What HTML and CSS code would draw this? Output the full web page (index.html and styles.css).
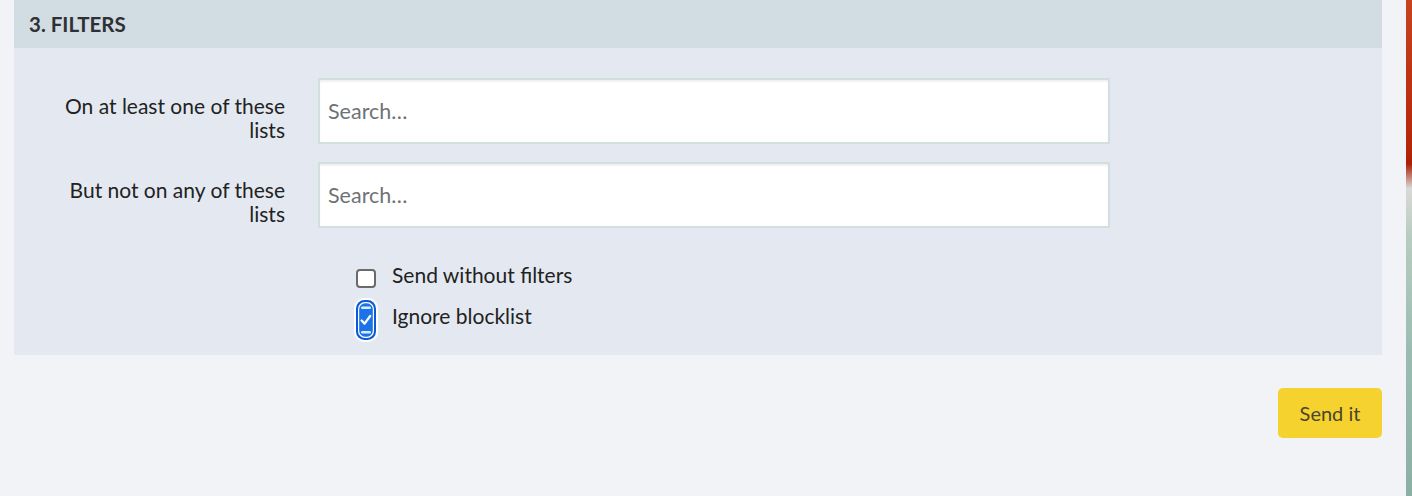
FILE: index.html
```html
<!DOCTYPE html>
<html>
<head>
<meta charset="utf-8">
<link rel="stylesheet" href="styles.css">
</head>
<body>
<div class="page">
  <div class="main">
    <section class="panel">
      <div class="panel-head">3. FILTERS</div>
      <div class="panel-body">
        <div class="row">
          <label class="label">On at least one of these lists</label>
          <div class="field"><input class="search" type="text" placeholder="Search…"></div>
        </div>
        <div class="row">
          <label class="label">But not on any of these lists</label>
          <div class="field"><input class="search" type="text" placeholder="Search…"></div>
        </div>
        <div class="checks">
          <div class="check check-first">
            <span class="box"></span>
            <span class="check-text">Send without filters</span>
          </div>
          <div class="check check-second">
            <span class="box-on">
              <svg width="24" height="44" viewBox="0 0 24 44">
                <rect x="0" y="0" width="24" height="44" rx="10" fill="#ffffff"/>
                <rect x="2" y="2" width="20" height="40" rx="8.5" fill="#0b5ad9"/>
                <rect x="4" y="4" width="16" height="36" rx="7" fill="#ffffff"/>
                <rect x="5.2" y="5.2" width="13.6" height="33.6" rx="6" fill="#1a73e8"/>
                <rect x="7" y="8.5" width="10" height="2.6" rx="1.3" fill="#dfeafc"/>
                <rect x="7" y="33" width="10" height="2.6" rx="1.3" fill="#dfeafc"/>
                <path d="M7.6 22.5 L10.6 25.6 L16.2 18" fill="none" stroke="#ffffff" stroke-width="2.3" stroke-linecap="round" stroke-linejoin="round"/>
              </svg>
            </span>
            <span class="check-text">Ignore blocklist</span>
          </div>
        </div>
      </div>
    </section>
    <div class="actions">
      <button class="send" type="button">Send it</button>
    </div>
  </div>
  <div class="edge"></div>
</div>
</body>
</html>
```

FILE: styles.css
```css
* { box-sizing: border-box; }
html, body { margin: 0; padding: 0; }
body {
  background: #f2f3f7;
  font-family: "Lato", "Noto Sans", sans-serif;
  color: #222;
  width: 1412px;
  height: 496px;
  overflow: hidden;
}
.page {
  display: flex;
  height: 496px;
}
.main {
  flex: 1;
  padding: 0 24px 0 14px;
}
.edge {
  width: 6px;
  background: linear-gradient(180deg, #c8421e 0%, #b42608 30%, #aa1f05 33%, #d9d9d6 38%, #b6ccc0 48%, #9bbdb1 70%, #8ab0a3 100%);
}
.panel-head {
  height: 48px;
  background: #d1dce3;
  padding: 0 15px;
  display: flex;
  align-items: center;
  font-weight: 700;
  font-size: 20.5px;
  color: #2e3033;
}
.panel-body {
  background: #e4e9f1;
  padding: 30px 0 0 0;
  height: 307px;
}
.row {
  display: flex;
  align-items: flex-start;
  margin-bottom: 18px;
}
.label {
  width: 271px;
  margin-right: 33px;
  padding-top: 16px;
  text-align: right;
  font-size: 21px;
  line-height: 24px;
  color: #222;
  padding-left: 40px;
}
.field { width: 792px; }
.search {
  width: 100%;
  height: 66px;
  border: 2px solid #d3dedf;
  background: #fff;
  box-shadow: inset 0 2px 2px rgba(0,0,0,0.06);
  padding: 0 8px;
  font-family: inherit;
  font-size: 21.5px;
  color: #222;
  outline: none;
}
.search::placeholder { color: #6f7275; }
.checks {
  padding-left: 340px;
  padding-top: 16px;
  display: flex;
  flex-direction: column;
}
.check {
  display: flex;
  align-items: center;
}
.check-first {
  height: 28px;
  margin-bottom: 8px;
}
.check-first .check-text { align-self: flex-start; }
.box {
  width: 20px;
  height: 19px;
  border: 2px solid #6a6a6a;
  border-radius: 4px;
  background: #fff;
  margin-left: 2px;
  margin-right: 16px;
  margin-top: 4px;
}
.box-on {
  display: block;
  width: 24px;
  height: 44px;
  margin-right: 14px;
}
.box-on svg { display: block; }
.check-text {
  font-size: 21px;
  color: #222;
}
.check-second .check-text { margin-top: -10px; }
.actions {
  display: flex;
  justify-content: flex-end;
  padding-top: 33px;
}
.send {
  width: 104px;
  height: 50px;
  background: #f5d22e;
  border: none;
  border-radius: 5px;
  font-family: inherit;
  font-size: 20px;
  color: #4a4430;
}
```
